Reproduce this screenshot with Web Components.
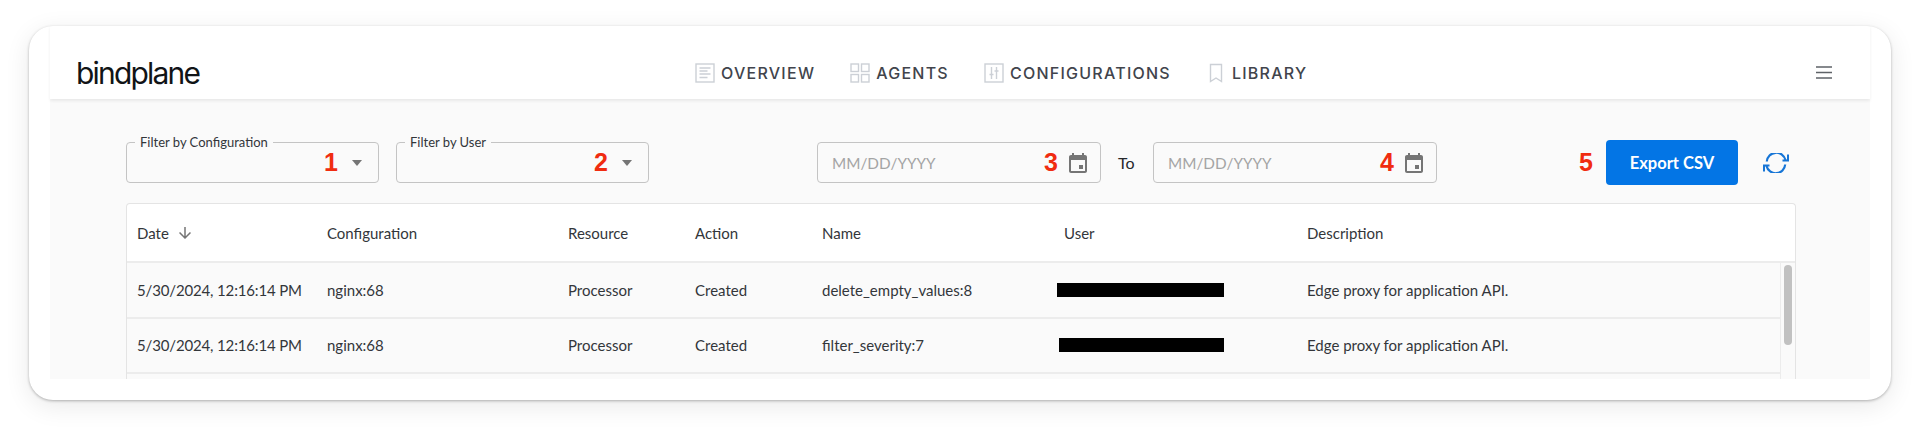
<!DOCTYPE html>
<html lang="en">
<head>
<meta charset="utf-8">
<title>bindplane audit</title>
<style>
  html, body { margin: 0; height: 427px; background: #fff; overflow: hidden; }
  body { font-family: "Lato", "Noto Sans", sans-serif; color: #26282b; }
</style>
</head>
<body>

<app-frame>
  <top-bar slot="header">
    <nav-link icon="overview">OVERVIEW</nav-link>
    <nav-link icon="agents">AGENTS</nav-link>
    <nav-link icon="configurations">CONFIGURATIONS</nav-link>
    <nav-link icon="library">LIBRARY</nav-link>
  </top-bar>

  <filter-bar>
    <select-field label="Filter by Configuration" step="1"></select-field>
    <select-field label="Filter by User" step="2"></select-field>
    <date-range></date-range>
    <export-actions></export-actions>
  </filter-bar>

  <audit-table>
    <audit-row user-start="0" name="delete_empty_values:8"></audit-row>
    <audit-row user-start="2" name="filter_severity:7"></audit-row>
    <audit-row empty></audit-row>
  </audit-table>
</app-frame>

<script>
// Small helper, every element gets its markup + styles in an open shadow root
function shadowOf(el, html) {
  const root = el.attachShadow({ mode: 'open' });
  root.innerHTML = html;
  return root;
}

const NAV_ICONS = {
  overview: '<rect x="1" y="1" width="18" height="18"/><path d="M4.5 5h11M4.500 8h8M4.500 11h11M4.500 14.500h8"/>',
  agents: '<rect x="1" y="1" width="7.5" height="7.5"/><rect x="11.5" y="1" width="7.5" height="7.5"/><rect x="1" y="11.5" width="7.5" height="7.5"/><rect x="11.5" y="11.5" width="7.5" height="7.5"/>',
  configurations: '<rect x="1" y="1" width="18" height="18"/><path d="M7.5 4v12M12.5 4v12M5.5 11.5h4M10.5 8h4"/>',
  library: '<path d="M4.5 1.5h11v17l-5.5-3.5-5.5 3.5z"/>'
};

class AppFrame extends HTMLElement {
  constructor() {
    super();
    shadowOf(this, `
      <style>
        :host { display: block; height: 427px; box-sizing: border-box; padding: 26px 29px 27px; }
        .card {
          height: 100%; box-sizing: border-box; display: flex; flex-direction: column;
          padding: 0 21px 21px; background: #fff; border-radius: 24px;
          box-shadow: 0 1px 3px rgba(0,0,0,.28), 0 6px 26px rgba(0,0,0,.09);
        }
        .panel { flex: 1; min-height: 0; overflow: hidden; background: #fafafa; padding: 41px 74px 0 76px; }
      </style>
      <div class="card">
        <slot name="header"></slot>
        <div class="panel"><slot></slot></div>
      </div>`);
  }
}
customElements.define('app-frame', AppFrame);

class TopBar extends HTMLElement {
  constructor() {
    super();
    shadowOf(this, `
      <style>
        :host {
          display: grid; grid-template-columns: 645px auto 1fr; align-items: center; height: 73px;
          box-sizing: border-box; padding-top: 20px;
          position: relative; z-index: 1; box-shadow: 0 2px 3px rgba(0,0,0,.07);
        }
        .logo {
          font: 400 30px/1 "Inter", sans-serif; letter-spacing: -1.8px; color: #111417;
          padding: 0 0 0 26px;
        }
        nav { display: flex; gap: 35px; }
        .menu { justify-self: end; padding-right: 38px; display: flex; }
      </style>
      <div class="logo">bindplane</div>
      <nav><slot></slot></nav>
      <div class="menu">
        <svg width="16" height="13" viewBox="0 0 16 13" fill="none" stroke="#5f6368" stroke-width="1.7">
          <path d="M0 1h16M0 6.5h16M0 12h16"/>
        </svg>
      </div>`);
  }
}
customElements.define('top-bar', TopBar);

class NavLink extends HTMLElement {
  constructor() {
    super();
    const icon = NAV_ICONS[this.getAttribute('icon')];
    shadowOf(this, `
      <style>
        :host {
          display: flex; align-items: center; gap: 6px;
          font: 500 16px/20px "Inter", sans-serif; letter-spacing: 1.25px; color: #41444c;
        }
        svg { display: block; fill: none; stroke: #ccd0d6; stroke-width: 1.4; }
      </style>
      <svg width="20" height="20" viewBox="0 0 20 20">${icon}</svg>
      <slot></slot>`);
  }
}
customElements.define('nav-link', NavLink);

class FilterBar extends HTMLElement {
  constructor() {
    super();
    shadowOf(this, `
      <style>
        :host { display: flex; align-items: center; gap: 17px; height: 45px; margin-bottom: 18px; font-family: "Lato", sans-serif; }
      </style>
      <slot></slot>`);
  }
}
customElements.define('filter-bar', FilterBar);

// the red numbers are annotations on the screenshot
const STEP_CSS = `.step { font: 700 25px/1 "Liberation Sans", sans-serif; color: #f02c10; }`;

class SelectField extends HTMLElement {
  constructor() {
    super();
    shadowOf(this, `
      <style>
        :host { display: block; position: relative; width: 253px; height: 41px; box-sizing: border-box;
                border: 1px solid #c4c4c4; border-radius: 4px; }
        ${STEP_CSS}
        .label { position: absolute; left: 8px; top: -8px; padding: 0 5px; background: #fafafa;
                 font-size: 13px; line-height: 15px; color: #33363a; white-space: nowrap; }
        .value { height: 100%; display: flex; align-items: center; justify-content: flex-end; gap: 14px; padding-right: 16px; }
        .arrow { width: 0; height: 0; border: 5px solid transparent; border-top: 6px solid #757575; border-bottom: 0; }
      </style>
      <span class="label">${this.getAttribute('label')}</span>
      <div class="value"><span class="step">${this.getAttribute('step')}</span><span class="arrow"></span></div>`);
  }
}
customElements.define('select-field', SelectField);

class DateField extends HTMLElement {
  constructor() {
    super();
    shadowOf(this, `
      <style>
        :host { display: flex; align-items: center; width: 284px; height: 41px; box-sizing: border-box;
                border: 1px solid #c4c4c4; border-radius: 4px; padding: 0 10px 0 14px; }
        ${STEP_CSS}
        .hint { flex: 1; font-size: 15.3px; color: #a4a4a4; }
        svg { display: block; margin-left: 8px; }
      </style>
      <span class="hint">MM/DD/YYYY</span>
      <span class="step">${this.getAttribute('step')}</span>
      <svg width="24" height="24" viewBox="0 0 24 24" fill="#757575">
        <path d="M19 4h-1V2h-2v2H8V2H6v2H5c-1.1 0-2 .9-2 2v14c0 1.1.9 2 2 2h14c1.1 0 2-.9 2-2V6c0-1.1-.9-2-2-2zm0 16H5V9h14v11zm-6-6h4v4h-4z"/>
      </svg>`);
  }
}
customElements.define('date-field', DateField);

class DateRange extends HTMLElement {
  constructor() {
    super();
    shadowOf(this, `
      <style>
        :host { display: flex; align-items: center; gap: 17px; margin-left: 151px; }
        .to { font-size: 16px; color: #26282b; width: 18px; }
      </style>
      <date-field step="3"></date-field>
      <span class="to">To</span>
      <date-field step="4"></date-field>`);
  }
}
customElements.define('date-range', DateRange);

class ExportActions extends HTMLElement {
  constructor() {
    super();
    shadowOf(this, `
      <style>
        :host { display: flex; align-items: center; margin-left: auto; margin-right: 7px; }
        ${STEP_CSS}
        .btn { margin-left: 13px; width: 132px; height: 45px; border: 0; border-radius: 4px; background: #0375e5; color: #fff;
               font: 700 16.5px "Lato", sans-serif; }
        svg { display: block; margin-left: 25px; }
      </style>
      <span class="step">5</span>
      <button class="btn">Export CSV</button>
      <svg width="26" height="20" viewBox="0 0 26 20" fill="none" stroke="#1675d6" stroke-width="2.2">
        <path d="M3.800 8.500A9.500 9.500 0 0 1 22.500 7"/>
        <path d="M25 1.500V7.500H19.500" stroke-width="2"/>
        <path d="M22.200 11.500A9.500 9.500 0 0 1 3.500 13"/>
        <path d="M1 18.500V12.500H6.500" stroke-width="2"/>
      </svg>`);
  }
}
customElements.define('export-actions', ExportActions);

const COLS = 'grid-template-columns: 190px 241px 127px 127px 242px 243px 1fr;';

class AuditTable extends HTMLElement {
  constructor() {
    super();
    shadowOf(this, `
      <style>
        :host { display: block; box-sizing: border-box; background: #fff; font-size: 15px;
                border: 1px solid #e4e4e4; border-bottom: 0; border-radius: 4px 4px 0 0; height: 180px; overflow: hidden; }
        .head { display: grid; ${COLS} align-items: center; height: 57px; border-bottom: 2px solid #ececec; color: #33363a; }
        .head span { padding-left: 10px; display: flex; align-items: center; gap: 7px; }
        .body { display: flex; }
        .rows { flex: 1; min-width: 0; }
        .gutter { width: 15px; flex: none; box-sizing: border-box; background: #fafafa; border-left: 1px solid #ececec; padding: 2px 3px 0; }
        .thumb { height: 80px; background: #c1c1c1; border-radius: 4px; }
      </style>
      <div class="head">
        <span>Date
          <svg width="18" height="18" viewBox="0 0 24 24" fill="#757575"><path d="M20 12l-1.410-1.410L13 16.170V4h-2v12.170l-5.580-5.590L4 12l8 8z"/></svg>
        </span>
        <span>Configuration</span><span>Resource</span><span>Action</span><span>Name</span><span>User</span><span>Description</span>
      </div>
      <div class="body">
        <div class="rows"><slot></slot></div>
        <div class="gutter"><div class="thumb"></div></div>
      </div>`);
  }
}
customElements.define('audit-table', AuditTable);

class AuditRow extends HTMLElement {
  constructor() {
    super();
    if (this.hasAttribute('empty')) {
      shadowOf(this, `<style>:host { display: block; height: 40px; background: #fafafa; }</style>`);
      return;
    }
    const inset = this.getAttribute('user-start');
    shadowOf(this, `
      <style>
        :host { display: grid; ${COLS} align-items: center; height: 53.5px; background: #fafafa; border-bottom: 2px solid #ececec; color: #33363a; }
        span { padding-left: 10px; white-space: nowrap; }
        .date { letter-spacing: -.15px; }
        .redact { display: block; padding: 0; height: 14px; background: #000; width: ${167 - inset}px; margin-left: ${3 + +inset}px; }
      </style>
      <span class="date">5/30/2024, 12:16:14 PM</span><span>nginx:68</span><span>Processor</span><span>Created</span>
      <span>${this.getAttribute('name')}</span>
      <i class="redact"></i>
      <span>Edge proxy for application API.</span>`);
  }
}
customElements.define('audit-row', AuditRow);
</script>
</body>
</html>
